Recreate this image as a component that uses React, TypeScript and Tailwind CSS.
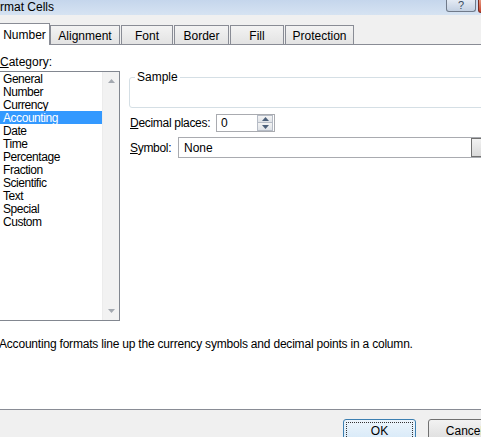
import React from 'react';

const categories = ['General', 'Number', 'Currency', 'Accounting', 'Date', 'Time', 'Percentage', 'Fraction', 'Scientific', 'Text', 'Special', 'Custom'];

const tabs = [
  { label: 'Alignment', w: 'w-[70px]' },
  { label: 'Font', w: 'w-[52px]' },
  { label: 'Border', w: 'w-[55px]' },
  { label: 'Fill', w: 'w-[54px]' },
  { label: 'Protection', w: 'w-[69px]' },
];

function Arrow({ up, color = '#a4a9b0' }: { up?: boolean; color?: string }) {
  return (
    <svg width="7" height="4" viewBox="0 0 7 4">
      <path d={up ? 'M0 4 L3.5 0 L7 4 Z' : 'M0 0 L7 0 L3.5 4 Z'} fill={color} />
    </svg>
  );
}

export default function App() {
  return (
    <div className="relative flex h-[437px] w-[481px] flex-col overflow-hidden bg-[#f0f0f0] text-[12px] leading-[13px] text-black [font-family:'Liberation_Sans',Arial,sans-serif]">
      {/* title bar */}
      <div className="-mr-[41px] flex h-[15px] shrink-0 items-start bg-gradient-to-b from-[#c5d6ec] to-[#d6e3f2]">
        <span className="-ml-[14px] mt-[1px]">Format Cells</span>
        <div className="ml-auto flex h-[12px] w-[30px] shrink-0 items-center justify-center rounded-b-[3px] border border-t-0 border-[#707a8a] bg-gradient-to-b from-[#e4ebf4] to-[#c3d0e2] text-[11px] leading-none text-[#3a4a5e]">
          ?
        </div>
        <div className="ml-[2px] h-[13px] w-[44px] shrink-0 rounded-bl-[3px] border border-t-0 border-[#7a2b20] bg-gradient-to-b from-[#e79882] to-[#c4412b]" />
      </div>

      {/* tabs */}
      <div className="relative z-10 mt-[8px] flex h-[21px] shrink-0 items-end -ml-[3px]">
        <div className="-mb-[1px] flex h-[22px] w-[53px] items-center justify-center border border-b-0 border-[#898c95] bg-white pl-[2px] pt-[1px]">
          Number
        </div>
        {tabs.map((t) => (
          <div
            key={t.label}
            className={`${t.w} mr-[1px] flex h-[19px] items-center justify-center border border-b-0 border-[#898c95] bg-gradient-to-b from-[#f3f3f3] to-[#e3e3e3] pt-[2px]`}
          >
            {t.label}
          </div>
        ))}
      </div>

      {/* panel */}
      <div className="flex h-[366px] shrink-0 flex-col border-y border-[#898c95] bg-white">
        <div className="flex">
          <div className="flex w-[120px] shrink-0 flex-col pt-[11px]">
            <span>
              <u>C</u>ategory:
            </span>
            <div className="-ml-[1px] mt-[2px] flex h-[250px] w-[121px] border border-[#828790]">
              <div className="flex flex-1 flex-col tracking-[-0.45px]">
                {categories.map((c) => (
                  <div key={c} className={`h-[13px] pl-[3px] pt-[1px] leading-[12px] ${c === 'Accounting' ? 'bg-[#3399ff] text-white' : ''}`}>
                    {c}
                  </div>
                ))}
              </div>
              <div className="flex w-[17px] flex-col items-center justify-between border-l border-[#ececec] bg-[#f2f2f2] py-[7px]">
                <Arrow up />
                <Arrow />
              </div>
            </div>
          </div>

          <div className="ml-[9px] flex flex-col pt-[26px]">
            <fieldset className="h-[37px] w-[360px] rounded-[3px] border border-[#d5dfe5]">
              <legend className="ml-[5px] px-[2px]">Sample</legend>
            </fieldset>
            <div className="mt-[6px] flex items-center pl-[1px]">
              <span className="w-[86px] pt-[1px] tracking-[-0.3px]">
                <u>D</u>ecimal places:
              </span>
              <div className="flex h-[18px] w-[59px] items-center border border-[#a9abb0] pl-[4px]">
                <span className="flex-1 pt-[1px]">0</span>
                <div className="mr-[1px] flex h-[16px] w-[16px] flex-col">
                  <div className="flex h-[8px] items-center justify-center border border-[#b6bcc6] bg-gradient-to-b from-[#f4f4f4] to-[#dfe3e8]">
                    <Arrow up color="#4c607a" />
                  </div>
                  <div className="flex h-[8px] items-center justify-center border border-t-0 border-[#b6bcc6] bg-gradient-to-b from-[#f4f4f4] to-[#dfe3e8]">
                    <Arrow color="#4c607a" />
                  </div>
                </div>
              </div>
            </div>
            <div className="mt-[5px] flex items-center pl-[1px]">
              <span className="w-[48px] pt-[1px] tracking-[-0.3px]">
                <u>S</u>ymbol:
              </span>
              <div className="flex h-[21px] w-[310px] items-center border border-[#a9abb0] pl-[5px]">
                <span className="flex-1 pt-[1px]">None</span>
                <div className="h-[19px] w-[16px] border border-[#707070] bg-gradient-to-b from-[#f2f2f2] to-[#d9d9d9]" />
              </div>
            </div>
          </div>
        </div>
        <p className="-ml-[1px] mt-[17px] tracking-[-0.2px]">Accounting formats line up the currency symbols and decimal points in a column.</p>
      </div>

      {/* buttons */}
      <div className="mt-[9px] flex gap-[12px] pl-[343px]">
        <button className="flex h-[23px] w-[73px] shrink-0 items-center justify-center rounded-[3px] border border-[#3c7fb1] bg-gradient-to-b from-[#edf5fc] to-[#d6e9f8] p-[2px]">
          <span className="flex h-full w-full items-center justify-center border border-dotted border-[#333] pt-[1px]">OK</span>
        </button>
        <button className="flex h-[23px] w-[73px] shrink-0 items-center justify-center rounded-[3px] border border-[#707070] bg-gradient-to-b from-[#f2f2f2] to-[#dddddd] pt-[1px]">
          Cancel
        </button>
      </div>
    </div>
  );
}
